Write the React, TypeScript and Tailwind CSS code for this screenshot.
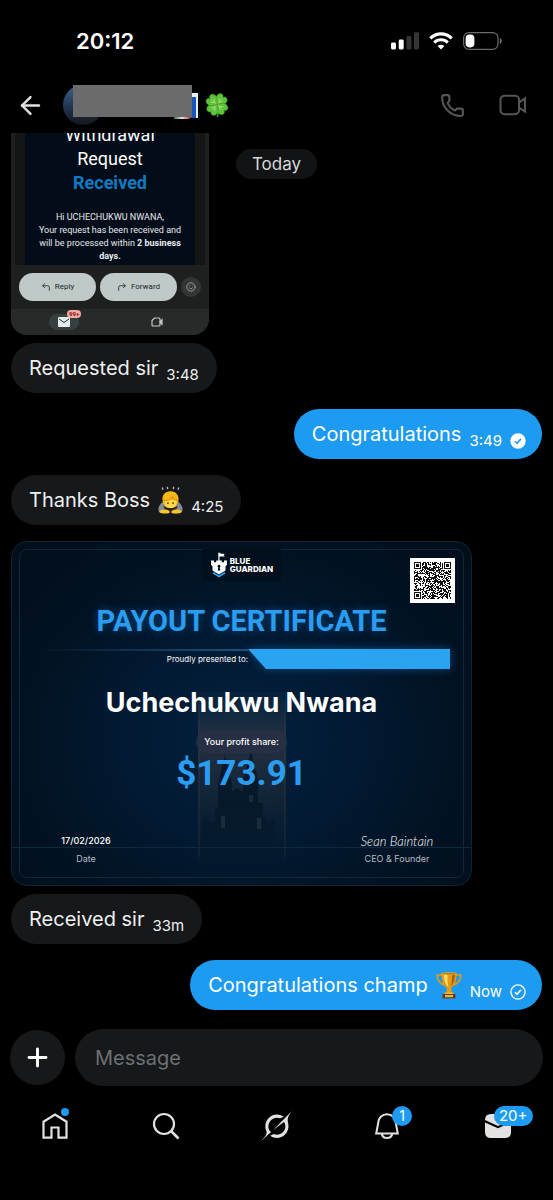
import type { ReactNode } from 'react'
import { ArrowLeft, CornerUpLeft, CornerUpRight, Phone, Plus, Smile } from 'lucide-react'

function SignalIcon() {
  return (
    <svg width="28" height="18" viewBox="0 0 28 18">
      <rect x="0" y="10.5" width="5" height="7" rx="1.4" fill="#fff" />
      <rect x="7.7" y="7.5" width="5" height="10" rx="1.4" fill="#fff" />
      <rect x="15.4" y="4" width="5" height="13.5" rx="1.4" fill="#353535" />
      <rect x="23" y="0.3" width="5" height="17.2" rx="1.4" fill="#353535" />
    </svg>
  )
}

function WifiIcon() {
  return (
    <svg width="24" height="18" viewBox="0 0 24 18" fill="none" stroke="#fff">
      <path d="M1.3 6.3a15.3 15.3 0 0 1 21.4 0" strokeWidth="3.2" />
      <path d="M5.2 10.6a9.8 9.8 0 0 1 13.6 0" strokeWidth="3" />
      <path d="M12 17.6l-3.4-3.5a4.9 4.9 0 0 1 6.8 0z" fill="#fff" stroke="none" />
    </svg>
  )
}

function BatteryIcon() {
  return (
    <svg width="39" height="18" viewBox="0 0 39 18">
      <rect x="0.6" y="0.6" width="34.4" height="16.8" rx="5.4" fill="none" stroke="#6b6b6b" strokeWidth="1.2" />
      <rect x="2.6" y="2.6" width="8.8" height="12.8" rx="3.8" fill="#fff" />
      <path d="M36.8 6v6c1.4-.5 2-1.7 2-3s-.6-2.5-2-3z" fill="#6b6b6b" />
    </svg>
  )
}

function VideoIcon() {
  return (
    <svg width="28" height="22" viewBox="0 0 28 22" fill="none" stroke="#565656" strokeWidth="2">
      <rect x="1.5" y="1.8" width="18.5" height="18.4" rx="4" />
      <path d="M20 8.3l6-4v13.4l-6-4z" />
    </svg>
  )
}

function Clover() {
  const leaf = 'M12 12C8.5 10 5.5 7.5 6.5 3.8C7.3 .8 10.8 .3 12 3C13.2 .3 16.7 .8 17.5 3.8C18.5 7.5 15.5 10 12 12Z'
  return (
    <svg width="26" height="26" viewBox="0 0 24 25">
      <path d="M12 12c1 4 1.8 7 .3 12" stroke="#3f9d2b" strokeWidth="1.5" fill="none" />
      {[40, 130, 220, 310].map((angle) => (
        <g key={angle} transform={`rotate(${angle} 12 12)`}>
          <path d={leaf} fill="#5cc23c" stroke="#2f8a20" strokeWidth=".4" />
          <path d="M12 11V5M12 9l-2.5-3M12 9l2.5-3" stroke="#a6e06e" strokeWidth=".8" fill="none" />
        </g>
      ))}
    </svg>
  )
}

function BowingPerson() {
  return (
    <svg width="25" height="28" viewBox="0 0 24 27">
      <path d="M4 1.5l.8 2M9 .7l.3 2.3M15 .7l-.3 2.3M20 1.5l-.8 2" stroke="#b9b9b9" strokeWidth="1.3" />
      <path d="M5 15C1 17.5-.5 22 .8 24.5c3 1.5 6 1 8-1.5h6.4c2 2.5 5 3 8 1.5C24.5 22 23 17.5 19 15z" fill="#858b92" />
      <path d="M12 5C6.5 5 3.8 9 4.3 13.5c.4 4.5 4 8.500 7.7 8.500s7.3-4 7.7-8.500C20.2 9 17.5 5 12 5z" fill="#f6b818" />
      <path d="M6.500 15c1.5-2 9.5-2 11 0 .5 4-2 6.500-5.500 6.500S6 19 6.500 15z" fill="#ffd84a" />
      <path d="M5 13.500c3 1 7 0 9-3 1 2 3 3 5 3" stroke="#d98d0b" fill="none" />
      <circle cx="9.500" cy="16.500" r=".9" fill="#55370d" />
      <circle cx="14.500" cy="16.500" r=".9" fill="#55370d" />
      <path d="M5 19c4 3 10 3 14 0l-2 5c-3 2-7 2-10 0z" fill="#2c2419" />
      <path d="M1 25c2-3 6-3 10-1v2c-3 1-8 .8-10-1zM23 25c-2-3-6-3-10-1v2c3 1 8 .8 10-1z" fill="#fbc62d" />
    </svg>
  )
}

function Trophy() {
  return (
    <svg width="26" height="27" viewBox="0 0 26 27">
      <path d="M6 3H1.2c0 6 2.5 9 8.3 10M20 3h4.8c0 6-2.5 9-8.3 10" stroke="#e09a1a" strokeWidth="1.7" fill="none" />
      <path d="M5.500 1.500h15c0 7-1.500 12.500-5.500 14.500l.8 5h-5.600l.8-5C7 14 5.500 8.500 5.500 1.500z" fill="#e49a12" />
      <path d="M8 2h3.500c-.3 6 .2 10 1 13C9.500 13 8 8 8 2z" fill="#ffdd63" />
      <path d="M16 2h3c-.3 6-1.5 10-4 12.5 1-4 1.2-8 1-12.5z" fill="#a75f08" />
      <ellipse cx="13" cy="1.7" rx="7.7" ry="1.2" fill="#b87813" stroke="#f7c846" strokeWidth=".5" />
      <path d="M9 20.500h8l1 2H8z" fill="#f5b82f" />
      <path d="M6.500 22h13v4.300h-13z" fill="#6a3a17" />
      <path d="M9 23h8v2.200H9z" fill="#efb632" />
    </svg>
  )
}

function SeenIcon() {
  return (
    <svg width="16" height="16" viewBox="0 0 16 16" aria-label="Seen">
      <circle cx="8" cy="8" r="7.7" fill="#fff" />
      <path d="M5 8.300l2 2 4-4.600" fill="none" stroke="#1d9bf0" strokeWidth="1.5" />
    </svg>
  )
}

function SentIcon() {
  return (
    <svg width="16" height="16" viewBox="0 0 16 16" aria-label="Sent" fill="none" stroke="#fff">
      <circle cx="8" cy="8" r="7.1" strokeWidth="1.3" />
      <path d="M5 8.300l2 2 4-4.600" strokeWidth="1.5" />
    </svg>
  )
}

function GuardianLogo() {
  return (
    <svg width="18" height="26" viewBox="0 0 18 26">
      <path d="M8.300 9V.8h2v.9h4.500l-1.200 1.400 1.200 1.500H9.500V9z" fill="#fff" />
      <path d="M1 8.500h3v1.800h2.200V8.500h5.600v1.800H14V8.500h3v4.300l-1.500 1.400v4.300L9 22.500l-6.500-4v-4.300L1 12.800z" fill="#fff" />
      <path d="M9 12.800a1.500 1.500 0 0 1 .7 2.800l.6 3H7.700l.6-3a1.500 1.500 0 0 1 .7-2.800z" fill="#04111f" />
      <path d="M3 20.800l6 3.700 6-3.700" fill="none" stroke="#2aa3f4" strokeWidth="1.7" />
    </svg>
  )
}

const QR_SIZE = 37

function isQrDark(x: number, y: number) {
  const corners = [[0, 0], [QR_SIZE - 7, 0], [0, QR_SIZE - 7]]
  for (const [cx, cy] of corners) {
    const dx = x - cx
    const dy = y - cy
    if (dx >= -1 && dx <= 7 && dy >= -1 && dy <= 7) {
      const ring = Math.max(Math.abs(dx - 3), Math.abs(dy - 3))
      return ring === 3 || ring <= 1
    }
  }
  const n = Math.sin(x * 12.9898 + y * 78.233) * 43758.5453
  return n - Math.floor(n) > 0.48
}

function QrCode() {
  let path = ''
  for (let y = 0; y < QR_SIZE; y++) {
    for (let x = 0; x < QR_SIZE; x++) {
      if (isQrDark(x, y)) path += `M${x} ${y}h1v1h-1z`
    }
  }
  return (
    <svg viewBox={`0 0 ${QR_SIZE} ${QR_SIZE}`} className="size-full" aria-label="QR code">
      <path d={path} fill="#111" />
    </svg>
  )
}

function Castle() {
  return (
    <svg viewBox="0 0 88 180" className="h-[180px] w-[88px]">
      <defs>
        <linearGradient id="door" x1="0" y1="0" x2="0" y2="1">
          <stop offset="0" stopColor="#0d2f42" stopOpacity=".3" />
          <stop offset=".25" stopColor="#2b3242" stopOpacity=".9" />
          <stop offset=".6" stopColor="#172737" stopOpacity=".7" />
          <stop offset="1" stopColor="#071725" stopOpacity="0" />
        </linearGradient>
        <linearGradient id="haze" x1="0" y1="0" x2="0" y2="1">
          <stop offset=".45" stopColor="#05182a" stopOpacity=".9" />
          <stop offset="1" stopColor="#05182a" stopOpacity="0" />
        </linearGradient>
      </defs>
      <rect width="88" height="180" fill="url(#door)" />
      <path d="M4 180v-50l4-9 4 9h5v-14h3V92l7-29 7 29v7l5-3 6 4V88l8-29 7 29v23h5v14l6 5 6-5v55z" fill="url(#haze)" />
      <path d="M1 10v155M87 10v155" stroke="#4b4335" strokeWidth="2" opacity=".2" />
      <path d="M23 124h4v12h-4zM51 103h4v7h-4zM59 126h4v11h-4z" fill="#27394a" opacity=".6" />
    </svg>
  )
}

function EmailScreenshot() {
  return (
    <article className="w-[198px] overflow-hidden rounded-b-2xl bg-[#1e1f1f] font-['Roboto',sans-serif] text-[#e8eaed]">
      <div className="mx-1 bg-[#141515] px-2.5">
        <div className="bg-[#020d19] pb-0.5 text-center">
          <h2 className="-mt-2.5 text-[18px] leading-6 text-white">
            Withdrawal
            <br />
            Request
            <br />
            <span className="font-bold text-[#107bc0]">Received</span>
          </h2>
          <p className="mt-4 text-[9px] leading-[13px]">
            Hi UCHECHUKWU NWANA,
            <br />
            Your request has been received and
            <br />
            will be processed within <b>2 business</b>
            <br />
            <b>days.</b>
          </p>
        </div>
      </div>
      <div className="flex items-center gap-1 px-2 py-2 text-[8px] text-[#202625]">
        <button className="flex h-7 flex-1 items-center justify-center gap-1 rounded-full bg-[#bec9c8]">
          <CornerUpLeft size={10} /> Reply
        </button>
        <button className="flex h-7 flex-1 items-center justify-center gap-1 rounded-full bg-[#bec9c8]">
          <CornerUpRight size={10} /> Forward
        </button>
        <button aria-label="React" className="flex size-5 items-center justify-center rounded-full bg-[#343636] text-[#a8adac]">
          <Smile size={10} />
        </button>
      </div>
      <div className="flex h-[26px] items-center justify-between bg-[#282929] pr-[46px] pl-[38px]">
        <div className="relative flex h-4 w-[30px] items-center justify-center rounded-full bg-[#35403f]">
          <svg width="12" height="10" viewBox="0 0 12 10">
            <rect width="12" height="10" rx="1" fill="#e4ebea" />
            <path d="M1 2l5 3.500L11 2" fill="none" stroke="#252b2b" />
          </svg>
          <span className="absolute -top-1 left-[18px] rounded-full bg-[#f3a9a4] px-0.5 text-[6px] leading-2 font-bold text-[#7b1713]">
            99+
          </span>
        </div>
        <svg width="12" height="10" viewBox="0 0 12 10" fill="none" stroke="#c8cccb" strokeWidth="1.2">
          <path d="M3.500 1H8q1 0 1 1v6q0 1-1 1H2Q1 9 1 8V3.500z" />
          <path d="M9 5l2-2.200v4.400z" fill="#c8cccb" />
        </svg>
      </div>
    </article>
  )
}

function PayoutCertificate() {
  return (
    <article className="relative w-[461px] max-w-full overflow-hidden rounded-2xl border border-[#14232f] bg-[radial-gradient(ellipse_at_50%_58%,#03213f_0%,#021a33_35%,#021222_68%,#020e1a_100%)] p-[7px] font-['Inter',sans-serif] text-white">
      <div className="absolute inset-x-0 top-[150px] flex justify-center">
        <Castle />
      </div>
      <div className="absolute inset-x-0 bottom-[37px] h-px bg-[#0d2b3d]" />
      <div className="relative flex h-[329px] flex-col items-center rounded-lg border border-[#11283a]">
        <div className="-mt-px flex h-8 items-center gap-0.5 bg-[#02101d] px-2">
          <GuardianLogo />
          <p className="text-[8px] leading-2 font-extrabold">
            BLUE
            <br />
            GUARDIAN
          </p>
        </div>
        <div className="absolute top-2 right-2 size-[45px] bg-white p-1">
          <QrCode />
        </div>

        <h2 className="mt-6 font-['Roboto',sans-serif] text-[29px] leading-8 font-bold text-[#2a9df0] [text-shadow:0_0_8px_#064a80]">
          PAYOUT CERTIFICATE
        </h2>

        <div className="mt-3 flex h-5 w-full pr-[13px] pl-5">
          <div className="flex-1">
            <div className="h-0.5 bg-linear-to-r from-transparent to-[#1c537d]" />
            <p className="text-right text-[8px] leading-4">Proudly presented to:</p>
          </div>
          <div className="w-[202px] drop-shadow-[0_0_4px_#064a80]">
            <div className="h-full bg-[#2aa3f0] [clip-path:polygon(0_0,100%_0,100%_100%,18px_100%)]" />
          </div>
        </div>

        <p className="mt-4 text-[27px] leading-9 font-bold">Uchechukwu Nwana</p>
        <p className="mt-2.5 rounded-full bg-[#282f45]/80 px-2 text-[9px] leading-[22px] font-medium">
          Your profit share:
        </p>
        <p className="font-['Roboto',sans-serif] text-[35px] leading-[42px] font-bold text-[#2a9df0]">$173.91</p>

        <div className="mt-auto flex w-full justify-between px-[26px] pb-2.5 text-center text-[9px] leading-4">
          <div className="w-20">
            <p className="font-medium">17/02/2026</p>
            <p className="mt-0.5 text-[#b4bbc3]">Date</p>
          </div>
          <div className="w-20">
            <p className="font-['Lato',cursive] text-[13px] leading-4 font-light italic">Sean Baintain</p>
            <p className="mt-0.5 text-[#b4bbc3]">CEO &amp; Founder</p>
          </div>
        </div>
      </div>
    </article>
  )
}

type BubbleProps = {
  time: string
  own?: boolean
  status?: ReactNode
  children: ReactNode
}

function Bubble({ time, own, status, children }: BubbleProps) {
  return (
    <div
      className={
        own
          ? 'flex h-[50px] items-center gap-2 self-end rounded-full bg-[#1d9bf0] pr-4 pl-[18px] text-white'
          : 'flex h-[50px] items-center gap-2 self-start rounded-full bg-[#16181a] px-[18px] text-[#eef0f1]'
      }
    >
      <p className="flex items-center gap-2 text-[20px] leading-7">{children}</p>
      <span className="flex items-center gap-2 pt-3.5 text-[15px] leading-5">
        {time}
        {status}
      </span>
    </div>
  )
}

function TabBar() {
  return (
    <nav className="grid grid-cols-5 justify-items-center pt-5 text-[#e2e2e2]">
      <a href="#home" aria-label="Home" className="relative flex size-10 items-center justify-center">
        <svg width="28" height="28" viewBox="0 0 28 28" fill="none" stroke="currentColor" strokeWidth="2.2">
          <path d="M2.500 9.700L14 2.500l11.500 7.200v16h-8V15.500h-7v10.200h-8z" />
        </svg>
        <span className="absolute top-0.5 right-1.5 size-2 rounded-full bg-[#1d9bf0]" />
      </a>
      <a href="#search" aria-label="Search" className="flex size-10 items-center justify-center">
        <svg width="28" height="28" viewBox="0 0 28 28" fill="none" stroke="currentColor" strokeWidth="2.2">
          <circle cx="12" cy="12" r="10" />
          <path d="M19 19l7.500 7.500" strokeWidth="2.6" />
        </svg>
      </a>
      <a href="#grok" aria-label="Grok" className="flex size-10 items-center justify-center">
        <svg width="31" height="30" viewBox="0 0 33 32" fill="currentColor">
          <path d="M12.745 20.54l10.97-8.19c.539-.4 1.307-.244 1.564.38 1.349 3.288.746 7.241-1.938 9.955-2.683 2.714-6.417 3.31-9.83 1.954l-3.728 1.745c5.347 3.697 11.84 2.782 15.898-1.324 3.219-3.255 4.216-7.692 3.284-11.693l.008.009c-1.351-5.878.332-8.227 3.782-13.031L33 0l-4.54 4.59v-.014L12.743 20.544m-2.263 1.987c-3.837-3.707-3.175-9.446.1-12.755 2.42-2.449 6.388-3.448 9.852-1.979l3.72-1.737c-.67-.49-1.53-1.017-2.515-1.387-4.455-1.854-9.789-.931-13.41 2.728-3.483 3.523-4.579 8.94-2.697 13.561 1.405 3.454-.899 5.898-3.22 8.364C1.49 30.2.666 31.074 0 32l10.478-9.466" />
        </svg>
      </a>
      <a href="#notifications" aria-label="Notifications" className="relative flex size-10 items-center justify-center">
        <svg width="26" height="28" viewBox="0 0 26 28" fill="none" stroke="currentColor" strokeWidth="2">
          <path d="M4.200 11a8.800 8.800 0 0 1 17.600 0l2 10.500H2.200z" />
          <path d="M7.700 21.500c.8 6 9.800 6 10.600 0" />
        </svg>
        <span className="absolute top-0 left-[25px] size-5 rounded-full bg-[#1d9bf0] text-center text-[14px] leading-5 text-white">
          1
        </span>
      </a>
      <a href="#messages" aria-label="Messages" className="relative flex size-10 items-center justify-center">
        <svg width="28" height="26" viewBox="0 0 28 26" fill="currentColor">
          <path d="M1 7Q1 1 7 1h14q6 0 6 6v.5l-13 5.500z" />
          <path d="M1 9.500l13 5.800 13-5.800V19q0 6-6 6H7q-6 0-6-6z" />
        </svg>
        <span className="absolute top-0 left-4 h-5 w-[39px] rounded-full bg-[#1d9bf0] text-center text-[15px] leading-5 text-white">
          20+
        </span>
      </a>
    </nav>
  )
}

export default function App() {
  return (
    <div className="flex min-h-screen flex-col bg-black font-['Inter',sans-serif] text-white">
      <div className="flex h-[77px] items-center justify-between pt-1 pr-[51px] pl-[76px]">
        <time className="text-[22px] leading-7 font-semibold">20:12</time>
        <div className="flex items-center gap-2.5">
          <SignalIcon />
          <WifiIcon />
          <BatteryIcon />
        </div>
      </div>

      <header className="flex h-14 items-center justify-between pr-[26px] pl-4">
        <div className="flex items-center">
          <button aria-label="Back" className="text-[#e2e2e2]">
            <ArrowLeft size={29} />
          </button>
          <div className="relative ml-[18px] h-10 w-[135px]">
            <div className="size-10 rounded-full bg-linear-to-b from-[#3f6186] via-[#243a59] to-[#15151c]" />
            <div className="absolute top-2 right-0 h-[25px] w-2 border-t-4 border-r-2 border-[#e7edf5] bg-[#1757b8]" />
            <div className="absolute top-8 right-2 h-0.5 w-4 bg-linear-to-r from-[#1d7a44] via-[#e8e8e8] to-[#b03131]" />
            <div className="absolute top-0 left-2.5 h-8 w-[119px] bg-[#6b6b6b]" />
          </div>
          <div className="ml-1.5">
            <Clover />
          </div>
        </div>
        <div className="flex items-center gap-[34px] text-[#565656]">
          <button aria-label="Call">
            <Phone size={25} strokeWidth={2} />
          </button>
          <button aria-label="Video call">
            <VideoIcon />
          </button>
        </div>
      </header>

      <main className="relative flex flex-col overflow-hidden px-[11px]">
        <div className="absolute inset-x-0 top-4 flex justify-center">
          <span className="rounded-full bg-[#121314] px-4 text-[17px] leading-[30px] text-[#d6d9db]">Today</span>
        </div>
        <div className="flex flex-col gap-2">
          <EmailScreenshot />
          <Bubble time="3:48">Requested sir</Bubble>
        </div>
        <div className="mt-4 flex flex-col gap-4">
          <Bubble own time="3:49" status={<SeenIcon />}>
            Congratulations
          </Bubble>
          <Bubble time="4:25">
            Thanks Boss <BowingPerson />
          </Bubble>
          <div className="flex flex-col gap-2">
            <PayoutCertificate />
            <Bubble time="33m">Received sir</Bubble>
          </div>
          <Bubble own time="Now" status={<SentIcon />}>
            Congratulations champ <Trophy />
          </Bubble>
        </div>
      </main>

      <form className="flex items-center gap-2.5 px-2.5 pt-[19px]">
        <button type="button" aria-label="Add attachment" className="flex size-[55px] items-center justify-center rounded-full bg-[#16181a]">
          <Plus size={29} strokeWidth={2.4} />
        </button>
        <input
          type="text"
          aria-label="Message"
          placeholder="Message"
          className="h-[57px] min-w-0 flex-1 rounded-full bg-[#16181a] px-5 text-[20px] placeholder:text-[#6d7073] focus:outline-none"
        />
      </form>

      <TabBar />
    </div>
  )
}
